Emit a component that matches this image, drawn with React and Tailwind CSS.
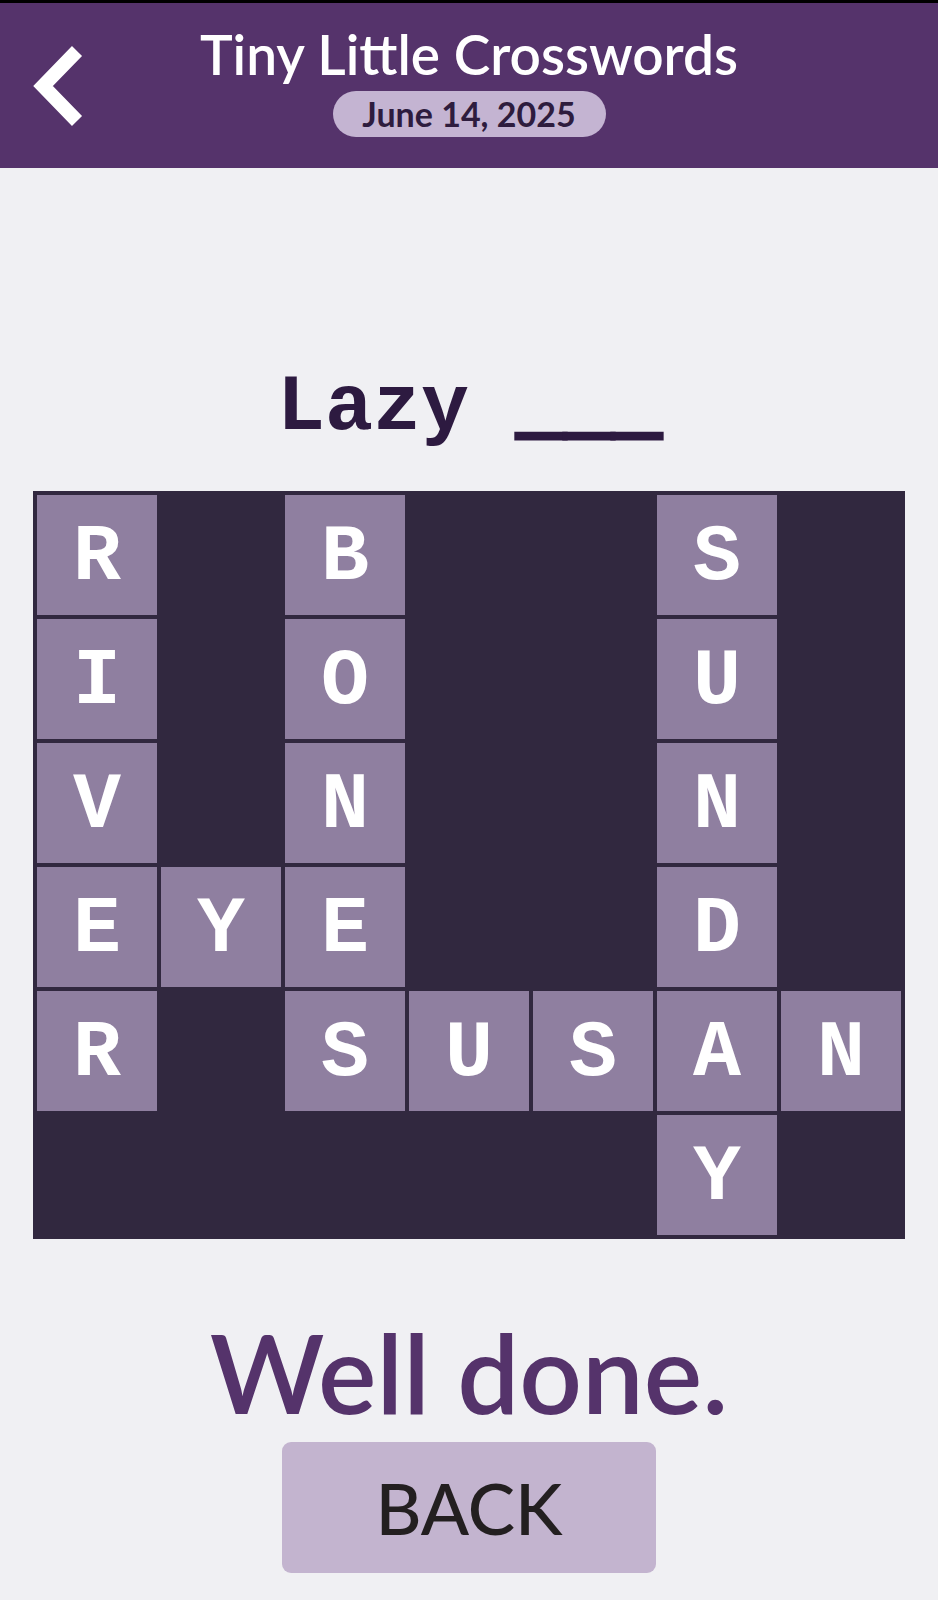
import React from "react";

const ROWS = [
  ["R", "", "B", "", "", "S", ""],
  ["I", "", "O", "", "", "U", ""],
  ["V", "", "N", "", "", "N", ""],
  ["E", "Y", "E", "", "", "D", ""],
  ["R", "", "S", "U", "S", "A", "N"],
  ["", "", "", "", "", "Y", ""],
];

function BackChevron() {
  return (
    <svg width="50" height="80" viewBox="0 0 50 80" className="block">
      <polyline
        points="44,5 10,40 44,75"
        fill="none"
        stroke="#ffffff"
        strokeWidth="14"
        strokeLinecap="butt"
        strokeLinejoin="miter"
      />
    </svg>
  );
}

function Cell({ letter }) {
  if (!letter) return <div className="h-[120px]" />;
  return (
    <div className="h-[120px] bg-[#8f7fa0] flex items-center justify-center pt-[6px]">
      <span className="text-white font-bold text-[80px] leading-none font-['Liberation_Mono',monospace]">
        {letter}
      </span>
    </div>
  );
}

export default function App() {
  return (
    <div className="min-h-[1600px] bg-[#f0f0f3] flex flex-col font-['Lato',sans-serif]">
      <div className="h-[3px] bg-black" />
      <header className="relative h-[165px] bg-[#55336b] flex flex-col items-center">
        <button className="absolute left-[33px] top-[43px]">
          <BackChevron />
        </button>
        <h1 className="mt-[23px] text-white font-semibold text-[55px] leading-[56px]">
          Tiny Little Crosswords
        </h1>
        <div className="mt-[9px] w-[273px] h-[46px] rounded-full bg-[#c4b4d2] flex items-center justify-center">
          <span className="text-[#2e1c3e] font-bold text-[34px] leading-none">
            June 14, 2025
          </span>
        </div>
      </header>

      <main className="flex flex-col items-center">
        <p className="mt-[200px] h-[80px] flex items-center text-[#2d1a40] font-bold text-[80px] leading-none font-['Liberation_Mono',monospace] whitespace-pre">
          Lazy <span className="[-webkit-text-stroke:5px_#2d1a40]">___</span>
        </p>

        <div className="mt-[43px] w-[872px] bg-[#31283f] p-1 grid grid-cols-7 gap-1">
          {ROWS.flatMap((row, r) =>
            row.map((letter, c) => <Cell key={`${r}-${c}`} letter={letter} />)
          )}
        </div>

        <h2 className="mt-[77px] text-[#55336b] font-semibold text-[110px] leading-[110px]">
          Well done.
        </h2>

        <button className="mt-[16px] w-[374px] h-[131px] rounded-[9px] bg-[#c3b4cf] flex items-center justify-center">
          <span className="text-[#231f20] font-medium text-[71px] leading-none">
            BACK
          </span>
        </button>
      </main>
    </div>
  );
}
